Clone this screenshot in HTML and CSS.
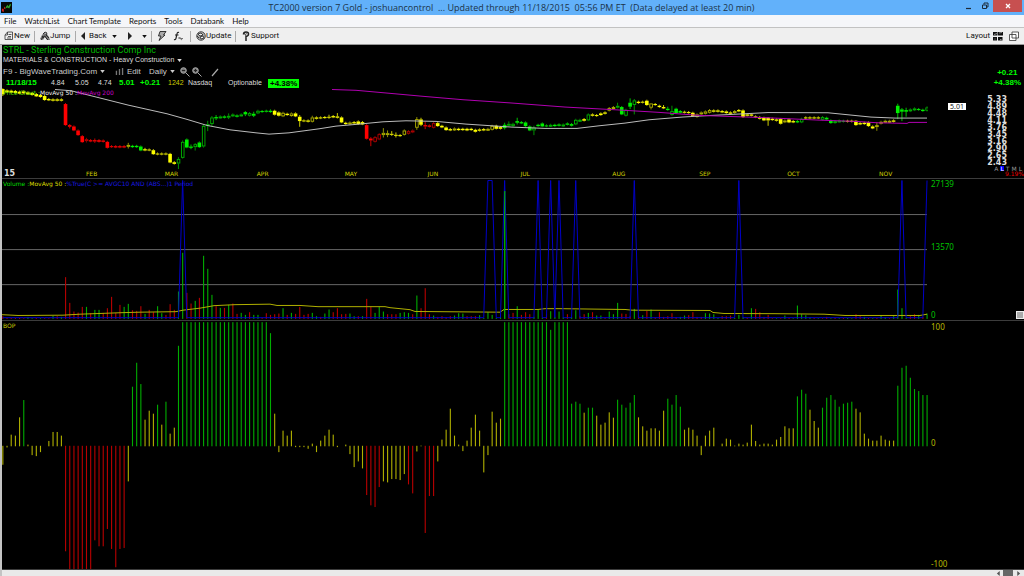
FILE: index.html
```html
<!DOCTYPE html>
<html lang="en">
<head>
<meta charset="utf-8">
<title>TC2000 version 7 Gold</title>
<link rel="stylesheet" href="styles.css">
</head>
<body>
<div class="app">
  <header class="titlebar">
    <svg class="app-icon" viewBox="0 0 12 12"><rect width="12" height="12" fill="#050805"/><path d="M1 10V7l2 1v3zM3 7l1-2 1 3z" fill="#e02020"/><path d="M5 6l2-3 1 2 2-3 1 1-2 4-2-1-2 1z" fill="#2ca42c"/></svg>
    <h1 class="title">TC2000 version 7 Gold - joshuancontrol  ... Updated through 11/18/2015  05:56 PM ET  (Data delayed at least 20 min)</h1>
    <div class="window-buttons">
      <button class="win" aria-label="Minimize"><svg viewBox="0 0 8 8"><path d="M1 6.500h5" stroke="#1c2a38" stroke-width="1.200"/></svg></button>
      <button class="win" aria-label="Restore"><svg viewBox="0 0 8 8" fill="none" stroke="#1c2a38"><path d="M1.500 3h4v3.500h-4zM3 2.500V1h4v4H6"/></svg></button>
      <button class="win close" aria-label="Close"><svg viewBox="0 0 8 8"><path d="M2 2l4 4M6 2l-4 4" stroke="#fff" stroke-width="1.300"/></svg></button>
    </div>
  </header>

  <nav class="menu">
    <a href="#">File</a><a href="#">WatchList</a><a href="#">Chart Template</a><a href="#">Reports</a><a href="#">Tools</a><a href="#">Databank</a><a href="#">Help</a>
  </nav>

  <div class="toolbar">
    <button class="tool tool-new"><svg class="ico" viewBox="0 0 10 10" fill="none" stroke="#333" stroke-width=".8"><path d="M3.500 1h5v7.500H1V4zM3.500 1v3H1M4 5.500h3M3 7h4M4.500 3.500h3"/></svg>New</button>
    <button class="tool tool-jump"><svg class="ico" viewBox="0 0 10 10"><path d="M0 8l2-4 2-2 3 1 2 3 1 3H7L5 6 3 9z" fill="#777"/><path d="M1 9l2-3 2-1 1 2 2 2M3 3l2-2 2 1-1 2 3 3M2 5l2 2" fill="none" stroke="#222" stroke-width=".9"/></svg>Jump</button>
    <button class="tool tool-back"><svg class="arrow" viewBox="0 0 6 8"><path d="M5 0v8L1 4z" fill="#222"/></svg>Back</button>
    <button class="tool tool-drop" aria-label="Back history"><svg class="caret" viewBox="0 0 6 4"><path d="M0 0h6L3 4z"/></svg></button>
    <button class="tool tool-forward" aria-label="Forward"><svg class="arrow" viewBox="0 0 6 8"><path d="M1 0v8l4-4z" fill="#222"/></svg></button>
    <button class="tool tool-drop-end" aria-label="Forward history"><svg class="caret" viewBox="0 0 6 4"><path d="M0 0h6L3 4z"/></svg></button>
    <button class="tool tool-flash" aria-label="Quick scan"><svg class="ico" viewBox="0 0 10 10"><path d="M3 .5h6L6.500 4H8L2 9.500 4 5H1.500z" fill="#aaa" stroke="#222" stroke-width=".9"/></svg></button>
    <button class="tool tool-formula" aria-label="Formula"><svg class="ico" viewBox="0 0 10 10" fill="none" stroke="#222"><path d="M6 1.500C4 .5 4 3 3.500 5S3 9.500 1 8.500M2 4h3.500" stroke-width="1.200"/><path d="M5.500 7q1-2 2 0t2 0M5.500 8q1-2 2 0t2-1" stroke-width=".6"/></svg></button>
    <button class="tool tool-update"><svg class="ico" viewBox="0 0 10 10"><circle cx="5" cy="5" r="4.300" fill="#aaa" stroke="#333" stroke-width=".8"/><path d="M2 3l3-1 2 2-3 1zM4 6l3-1 1 2-3 1zM1 5l2 2" fill="#eee" stroke="#222" stroke-width=".8"/></svg>Update</button>
    <button class="tool tool-support"><svg class="ico" viewBox="0 0 10 10" fill="none" stroke="#222"><path d="M2.500 3.500Q2.500 1 5 1t2.500 2Q7.500 5 5 5.500V10" stroke-width="1.500"/><path d="M4 3.500l2-1M3 2l2 3" stroke-width=".7"/></svg>Support</button>
    <div class="toolbar-end">
      <button class="tool tool-layout">Layout<svg class="ico" viewBox="0 0 10 10" fill="#111"><path d="M0 1h4.500v3.500H0zM5 1h5v3.500H5zM0 6h4v3.500H0zM5 6h4.500v3.500H5z"/><path d="M1 3.500l3-1M6 2l3-.5M1.500 8h1M7 8.500h1.500" stroke="#ddd" stroke-width=".6" fill="none"/></svg></button>
      <button class="tool" aria-label="Windows"><svg class="ico" viewBox="0 0 10 10" fill="#fff" stroke="#333" stroke-width=".8"><path d="M3 1h6.500v6H3zM.5 3.500H7v6H.5z"/></svg></button>
    </div>
  </div>

  <main class="charts">
    <section class="panel price">
      <div class="main-col">
        <div class="info">
          <h2 class="symbol">STRL - Sterling Construction Comp Inc</h2>
          <button class="sector">MATERIALS &amp; CONSTRUCTION - Heavy Construction<svg class="caret" viewBox="0 0 6 4"><path d="M0 0h6L3 4z"/></svg></button>
          <div class="controls">
            <button class="ctl ctl-list">F9 - BigWaveTrading.Com<svg class="caret" viewBox="0 0 6 4"><path d="M0 0h6L3 4z"/></svg></button>
            <button class="ctl ctl-edit"><svg class="bars-ico" viewBox="0 0 10 8" stroke="#777" stroke-width="1.500"><path d="M1.500 3v5M5 1v7M8.500 0v8"/></svg>Edit</button>
            <button class="ctl ctl-period">Daily<svg class="caret" viewBox="0 0 6 4"><path d="M0 0h6L3 4z"/></svg></button>
            <button class="ctl" aria-label="Zoom out"><svg class="ico" viewBox="0 0 10 10" stroke="#aaa" fill="#777"><circle cx="3.500" cy="3.500" r="2.800"/><path d="M6 6l3.500 3.500"/><path d="M2 3.500h3" stroke="#222"/></svg></button>
            <button class="ctl ctl-zoomin" aria-label="Zoom in"><svg class="ico" viewBox="0 0 10 10" stroke="#aaa" fill="#777"><circle cx="3.500" cy="3.500" r="2.800"/><path d="M6 6l3.500 3.500"/><path d="M2 3.500h3M3.500 2v3" stroke="#222"/></svg></button>
            <button class="ctl" aria-label="Draw line"><svg class="ico" viewBox="0 0 10 10"><path d="M1 9l6-7" stroke="#aaa" stroke-width="1.200"/></svg></button>
          </div>
          <div class="quote">
            <b class="up">11/18/15</b><span>4.84</span><span>5.05</span><span>4.74</span><b class="up">5.01</b><b class="up">+0.21</b><span class="vol">1242</span><span>Nasdaq</span><span>Optionable</span><b class="badge">+4.38%</b>
          </div>
        </div>
        <div class="plot-wrap">
          <svg class="plot" id="price" viewBox="2 88 926 81" preserveAspectRatio="none"></svg>
          <div class="legend"><span class="c-green">Price Chart :</span><span class="c-white">MovAvg 50 :</span><span class="c-magenta">MovAvg 200</span></div>
        </div>
        <div class="months">
          <b class="year">15</b><span>FEB</span><span>MAR</span><span>APR</span><span>MAY</span><span>JUN</span><span>JUL</span><span>AUG</span><span>SEP</span><span>OCT</span><span>NOV</span>
        </div>
      </div>
      <aside class="axis price-axis">
        <div class="change"><b>+0.21</b><b>+4.38%</b></div>
        <div class="scale-row">
          <span class="last">5.01</span>
          <div class="scale"><span>5.33</span><span>4.89</span><span>4.48</span><span>4.11</span><span>3.76</span><span>3.45</span><span>3.16</span><span>2.90</span><span>2.65</span><span>2.43</span></div>
        </div>
        <div class="modes"><span>A</span><span class="active">L</span><span>T</span><span>M</span><span>L</span></div>
        <span class="pct">9.19%</span>
      </aside>
    </section>

    <section class="panel volume">
      <div class="main-col plot-wrap">
        <svg class="plot" id="volume" viewBox="2 179 926 141" preserveAspectRatio="none"></svg>
        <div class="legend"><span class="c-lime">Volume :</span><span class="c-yellow">MovAvg 50 :</span><span class="c-blue">%True(C &gt;= AVGC10 AND (ABS...)1 Period</span></div>
      </div>
      <aside class="axis vol-axis"><span>27139</span><span class="mid">13570</span><div class="zero-row"><span>0</span><button class="grip" aria-label="Resize panel"></button></div></aside>
    </section>

    <section class="panel bop">
      <div class="main-col plot-wrap">
        <svg class="plot" id="bop" viewBox="2 321 926 248" preserveAspectRatio="none"></svg>
        <div class="legend"><span class="c-olive">BOP</span></div>
      </div>
      <aside class="axis bop-axis"><span>100</span><span class="mid">0</span><span>-100</span></aside>
    </section>
  </main>

  <footer class="scrollbar">
    <button class="sb" aria-label="Scroll left"><svg viewBox="0 0 6 6"><path d="M4.500 0v6L1 3z"/></svg></button>
    <span class="thumb"></span>
    <button class="sb" aria-label="Scroll right"><svg viewBox="0 0 6 6"><path d="M1.500 0v6L5 3z"/></svg></button>
  </footer>
</div>
<script src="charts.js"></script>
</body>
</html>
```

FILE: styles.css
```css
* { box-sizing: border-box; }
body { margin: 0; background: #000; font-family: "Liberation Sans", Arial, sans-serif; font-size: 8px; line-height: 10px; }
h1, h2 { margin: 0; font-weight: normal; }
button { margin: 0; padding: 0; border: 0; background: none; color: inherit; font: inherit; display: flex; align-items: center; white-space: nowrap; }
a { color: inherit; text-decoration: none; }
svg { display: block; flex: none; }
.app { display: flex; flex-direction: column; height: 100vh; border-left: 2px solid #c4c4c4; }

.titlebar { display: flex; align-items: flex-start; height: 15px; margin-left: -2px; background: #62b1fa; color: #1c3348; }
.app-icon { width: 11px; height: 11px; margin: 2px 0 0 1px; }
.title { flex: 1; text-align: center; white-space: pre; font: 9px/15px "Open Sans", "Noto Sans", sans-serif; padding-left: 50px; }
.window-buttons { display: flex; padding-right: 2px; }
.win { width: 16px; height: 12px; justify-content: center; }
.win svg { width: 8px; height: 8px; }
.close { width: 29px; background: #c75050; }

.menu { display: flex; gap: 8px; margin-left: -2px; padding-left: 4px; height: 13px; line-height: 12px; background: #f5f6f9; color: #111; border-bottom: 1px solid #c2c2c2; font-family: Lato, sans-serif; }

.toolbar { display: flex; align-items: center; height: 17px; margin-left: -2px; padding-left: 4px; background: #efefef; color: #111; border-bottom: 1px solid #999; font-family: Roboto, sans-serif; }
.tool { height: 11px; }
.ico { width: 10px; height: 10px; }
.arrow { width: 6px; height: 8px; margin-right: 3px; }
.caret { width: 5px; height: 3px; fill: currentColor; }
.tool-new { width: 31px; border-right: 1px solid #aaa; }
.tool-jump { width: 41px; padding-left: 5px; border-right: 1px solid #aaa; }
.tool-back { width: 36px; padding-left: 4px; }
.tool-drop { width: 15px; }
.tool-forward { width: 15px; }
.tool-drop-end { width: 10px; border-right: 1px solid #aaa; }
.tool-flash { width: 21px; padding-left: 5px; }
.tool-formula { width: 18px; border-right: 1px solid #aaa; }
.tool-update { width: 45px; padding-left: 5px; border-right: 1px solid #aaa; }
.tool-support { padding-left: 5px; }
.toolbar-end { display: flex; gap: 6px; margin-left: auto; padding-right: 5px; }
.tool-layout { gap: 3px; }

.charts { flex: 1; min-height: 0; display: flex; flex-direction: column; background: #000; color: #ddd; }
.panel { display: flex; min-height: 0; border-bottom: 1px solid #3c3c3c; }
.price { flex: 134 1 0; }
.volume { flex: 142 1 0; }
.bop { flex: 249 1 0; }
.main-col { flex: 1; min-width: 0; display: flex; flex-direction: column; }
.axis { width: 96px; display: flex; flex-direction: column; font-family: "Noto Sans", sans-serif; }
.plot-wrap { position: relative; flex: 1; min-height: 0; }
.plot { position: absolute; width: 100%; height: 100%; }
.legend { position: absolute; top: 1px; left: 1px; display: flex; font: 6px/8px "DejaVu Sans", sans-serif; white-space: nowrap; }

.info { padding-left: 1px; }
.symbol { font: 9px/10px Roboto, sans-serif; color: #00b800; }
.sector { gap: 3px; height: 10px; font-size: 7px; }
.controls { display: flex; height: 13px; align-items: center; color: #ccc; }
.ctl-list { width: 112px; gap: 3px; }
.ctl-edit { width: 34px; gap: 3px; }
.bars-ico { width: 9px; height: 7px; }
.ctl-period { width: 31px; gap: 3px; }
.ctl-zoomin { margin: 0 9px 0 2px; }
.quote { display: grid; grid-template-columns: 45px 24px 23px 21px 21px 28px 20px 40px 40px auto; justify-content: start; align-items: center; height: 10px; font-size: 7px; padding-left: 3px; white-space: nowrap; }
.quote .up { font-size: 8px; }
.up { color: #0f0; }
.vol { color: #cc0; }
.badge { background: #0f0; color: #000; font-size: 8px; line-height: 9px; padding: 0 2px; }

.months { display: grid; grid-template-columns: 83fr 79fr 92fr 88fr 83fr 93fr 92fr 87fr 88fr 92fr 49fr; height: 9px; padding-left: 1px; font: 6px/9px "DejaVu Sans", sans-serif; color: #d0d000; }
.months > * { min-width: 0; }
.year { color: #ddd; font-size: 8px; padding-left: 1px; }

.c-green { color: #5d0; }
.c-white { color: #eee; }
.c-magenta { color: #c800c8; }
.c-lime { color: #0d0; }
.c-yellow { color: #dd0; }
.c-blue { color: #1818e0; }
.c-olive { color: #cc0; }

.change { display: flex; flex-direction: column; align-self: flex-end; align-items: center; padding: 23px 3px 0 0; color: #0f0; font: 8px/10px "Liberation Sans", sans-serif; }
.scale-row { flex: 1; display: flex; justify-content: space-between; align-items: flex-start; padding: 8px 17px 0 20px; }
.last { background: #fff; color: #222; font-size: 7px; line-height: 7px; padding: 0 2px; margin-top: 7px; }
.scale { display: flex; flex-direction: column; font: bold 8px/7px "DejaVu Sans", sans-serif; color: #ddd; }
.price-axis { padding-bottom: 1px; }
.modes { display: flex; justify-content: flex-end; gap: 2px; padding-right: 2px; font: 6px/5px "DejaVu Sans", sans-serif; color: #999; }
.active { background: #00f; color: #fff; }
.pct { text-align: right; color: #e00; font: 6px/6px "DejaVu Sans", sans-serif; }
.vol-axis, .bop-axis { justify-content: space-between; padding-left: 3px; }
.vol-axis { color: #00c000; }
.bop-axis { color: #b8b800; padding-top: 1px; }
.mid { padding-bottom: 5px; }
.zero-row { display: flex; justify-content: space-between; align-items: center; }
.grip { width: 8px; height: 8px; background: #aaa; border: 1px solid #eee; }

.scrollbar { display: flex; justify-content: flex-end; height: 6px; background: #e9e9e9; padding-right: 1px; }
.sb { width: 10px; justify-content: center; }
.sb svg { width: 5px; height: 5px; fill: #555; }
.thumb { width: 10px; background: #666; }
```

FILE: charts.js
```js
const NS = "http://www.w3.org/2000/svg";
const X0 = 2.8, STEP = 4.182;
const barX = i => X0 + STEP * i;

function add(svg, tag, attrs) {
  const el = document.createElementNS(NS, tag);
  for (const k in attrs) el.setAttribute(k, attrs[k]);
  svg.appendChild(el);
}
function line(svg, points, color) {
  add(svg, "polyline", { points: points, fill: "none", stroke: color, "stroke-width": 1, "vector-effect": "non-scaling-stroke" });
}
function hline(svg, y, color) {
  line(svg, `2,${y} 927,${y}`, color);
}

/* Balance of power: 373 units is full scale. "*n" repeats the value n times. */
const bopData = `-57 -5 35 32 87 139 5 -28 -31 -19 0 16 43 43 32 -317 -373*6 -284 -302 -302 -250 -310 -365 -310 -307
-107 179 251 187 80 107 98 125 65 134 38 56 302 373*21 340 98 -19 47 32 47 -4 -4 -4 -9 8 -19 17 32 50 35
-4 0 5 -25 -64 -47 -68 -148 -179 -184 -124 -107 -110 -100 -100 -103 -85 -116 -143 -17 2 -262 -151 -151 -47 20 50 113
32 5 -16 17 56 95 47 -80 -28 104 71 83 373*11 350 373*4 128 134 128 101 116 116 92 65 71 102 86 140 125 116
131 154 87 60 47 54 54 47 107 143 125 154 119 50 56 50 32 -28 32 47 56 0 8 23 20 2 8 5 11 65 16 5 8 8 5 20
28 60 54 54 150 170 158 110 76 56 116 146 154 140 119 128 131 134 113 102 38 23 17 17 32 20 17 17 182 236 242 206 172 166 154 154`;

const bop = document.getElementById("bop");
bopData.trim().split(/\s+/).flatMap(t => {
  const [v, n] = t.split("*").map(Number);
  return Array(n || 1).fill(v);
}).forEach((v, i) => {
  if (!v) return;
  const h = Math.abs(v) / 3;
  const color = v > 114 ? "#00ac00" : v < -114 ? "#b80000" : "#b0b000";
  add(bop, "rect", { x: barX(i) - 0.5, y: v > 0 ? 446.5 - h : 446, width: 1.1, height: h, fill: color });
});

/* Volume bars: positive for up days, negative for down days. */
const volData = `-8 -3 -3 -3 -3 -2 6 2 -3 2 -2 -2 9 -8 6 -125 -48 -22 -19 -36 36 -17 27 27 -18 -32 -66 -18 -42 36 45 -26 -24 -38 15 -27 -20 38 17 -12 -44 -27 82 198 -78 -46 54 -63 189 150
72 -38 33 -33 42 -46 -15 18 12 -20 12 12 -4 -17 -12 -14 -16 32 -12 18 -15 -36 -12 -15 18 8 -6 16 28 -20 -32 -14 -15 16 8 -8 8 -60 -36 18 36 22 -14 -14 -14 18 20 18 -14 70
-32 -92 -14 10 -6 -8 -5 -8 10 17 16 -8 -8 -8 11 3 20 12 3 6 383 -14 -18 38 -12 -20 -14 6 28 4 -14 23 6 22 5 -14 6 26 -8 -14 18 -20 10 10 -3 22 14 48 -16 -15
-8 30 -10 11 -24 28 -4 -20 -6 -8 -17 -5 6 10 -11 -20 -6 -6 17 16 14 3 -8 -8 -10 3 12 5 -4 32 -30 -20 -6 -12 -2 2 -2 10 -3 2 40 14 11 5 -3 2 -2 -6 2 -3
2 -3 3 2 -14 -8 6 -3 2 -3 10 5 -2 8 88 32 3 -8 -14 12 -6 16`;

const vol = document.getElementById("volume");
[214.5, 249.5, 284.5].forEach(y => hline(vol, y, "#666"));
volData.trim().split(/\s+/).map(Number).forEach((v, i) => {
  const h = Math.abs(v) / 3;
  add(vol, "rect", { x: barX(i) - 0.5, y: 318.7 - h, width: 1.1, height: h, fill: v > 0 ? "#00ac00" : "#b80000" });
});
line(vol, "2,314.5 18,315.3 63,315 80,314 122,312.5 140,312 176,311.5 183,310 200,308 214,305.5 235,304.5 270,304 277,305.3 300,305.3 318,306.5 385,306.5 390,307.5 410,309.5 415,311.3 500,312 504,309.3 538,309.3 545,308.5 560,308.5 625,309.3 632,310 710,310.3 713,312.3 724,313.3 774,313.5 824,314 845,315.3 920,315.3 927,314", "#b0b000");
const peaks = [43, 116, 117, 120, 128, 131, 133, 137, 151, 176, 215, 221];
line(vol, Array.from({ length: 222 }, (_, i) => `${barX(i)},${peaks.includes(i) ? 180.5 : 317.5}`).join(" "), "#0000c8");
add(vol, "rect", { x: barX(120) - 0.5, y: 191, width: 1.1, height: 127.5, fill: "#00ac00" });

/* Candles: colour letter (lower case = hollow), body top, body bottom[, high[, low]] in thirds of a pixel. */
const candles = `Y12,28,10,33 Y16,22 Y17,23 Y18,24 Y20,26 Y19,25 Y22,28 Y24,30 Y27,34,24,36 Y30,36 Y33,45 Y42,46 Y43,47 Y43,47 Y43,47
R57,120 R120,125,117,130 R124,136 R136,150 R153,171 r162,168,158,172 R165,169 R165,169,160,173 R165,170 R166,170 R170,188 R183,186 R183,187 R183,187 R183,187
y179,184,173,190 G182,186 G182,186 G184,196 Y192,196,188 Y193,196 Y195,207 Y205,208 Y205,208 Y205,208 Y206,232 Y231,236,228,238 g221,235,216,256 g170,218,166,220 G163,187
G184,188,178,192 g177,186,174,196 G172,186 g122,184,118,187 g117,122,107,138 g97,117,93,124 G96,100,90,105 g94,98 G94,98 g92,98,85,102 g88,94 G91,95 g88,92 G81,88,78,93 g84,92
G86,92,80,96 g77,85 G78,81 G77,80 G77,81,73 Y77,89 Y82,92 y83,94 Y86,90 y85,93 Y85,94 Y95,108,90,125 Y106,109 Y106,110 y97,110,92 Y97,101
Y97,100 Y96,99 Y95,98,89,101 Y93,97 Y94,98,84 Y97,112 Y113,117 y112,118 Y111,115 Y109,117 Y111,118 R120,161 R160,166,156,183 r156,170 r147,163
y143,150,129,157 y144,150,136,156 Y146,149,138,152 Y149,152,142,157 Y150,153 y136,149 r138,146 r136,142 y102,128,96,134 Y103,119,98,123 R120,124,110,132 R121,125 r114,128 Y114,123 Y122,127
Y127,135 Y132,136 y130,135 Y131,135 Y131,135 Y131,136 Y131,135 Y134,140 Y133,137 Y132,136 y131,135 y122,134 Y122,131 Y126,131 G119,129,113,133
g116,122,109 g116,123 G108,113,98,118 G111,115 G112,123 G124,136 g127,136,122,150 G119,123 G115,124 G121,124 g119,123 G119,123 G118,122 g118,123 G115,119
G117,122 g104,118 g104,108 Y102,107 g88,106 Y88,92 Y90,93 Y85,90 Y82,86 y69,77 y66,70 g62,68,53 G66,88 g74,92 G53,65,40,72
g46,60,42,88 Y50,54 Y50,53 Y47,60 y55,68,55,73 Y57,60 Y62,66 Y66,70,60 G71,75,65 g78,90,62 G71,84 G78,83 Y80,83 Y81,84 Y83,93
y88,96 y82,88 y79,86 y75,83 Y76,80 Y76,80 Y78,82 Y79,84 Y82,86 y78,84 Y75,79 Y76,96 Y88,92 Y88,92 Y94,97
Y96,101 Y98,106 Y98,106,96,122 Y101,105 Y103,107 Y102,116 y106,112 Y103,112 Y108,112 G108,112 g101,112 Y97,100 Y97,100 Y97,100 Y97,100
g96,104 G98,103 G106,114 g108,114 g106,110 G107,110 Y107,110 Y107,110 Y107,120,105,122 Y114,118 Y113,117 Y112,123 Y124,130 y120,126,112,137 y110,116
y107,111 y107,111 Y106,110 G62,84,56,102 G73,80,69,108 G75,80,68,95 g73,79 g70,76 G72,75 G74,78 g67,77`;

const price = document.getElementById("price");
const palette = { Y: "#ffff00", G: "#00f000", R: "#ff0000", y: "#b4b400", g: "#00b400", r: "#b40000" };
candles.trim().split(/\s+/).slice(0, 222).forEach((c, i) => {
  const [top, bottom, high, low] = c.slice(1).split(",").map(Number);
  const y = v => 85 + v / 3;
  const color = palette[c[0]], x = barX(i), hollow = c[0] >= "a";
  const hi = high || top - 3, lo = low || bottom + 2;
  add(price, "rect", { x: x - 0.5, y: y(hi), width: 1, height: (top - hi) / 3, fill: color, opacity: 0.8 });
  add(price, "rect", { x: x - 0.5, y: y(bottom), width: 1, height: Math.max(0, lo - bottom) / 3, fill: color, opacity: 0.8 });
  add(price, "rect", hollow
    ? { x: x - 1.2, y: y(top) + 0.5, width: 2.6, height: Math.max(1, (bottom - top) / 3 - 1), fill: "none", stroke: color, "stroke-width": 0.9 }
    : { x: x - 1.8, y: y(top), width: 3.6, height: (bottom - top) / 3, fill: color });
});
line(price, "55,89.5 71,90.7 128,105 167,113.7 187,119.3 207,125.3 230,129.7 256,132.7 269,134 289,132.7 319,128.7 336,126 356,124.3 383,121.7 406,120.7 436,121.3 466,124 512,127 545,128.3 577,128.3 599,125.7 625,123 649,119.7 682,117 699,116 732,114.3 768,112.5 828,112.7 851,115 871,117 895,118 927,118", "#bbb");
line(price, "332,89.5 356,90.3 383,92.7 423,96.3 463,99.7 512,103 565,107 615,109.7 659,112.3 699,115.3 768,117.7 818,120 855,121.3 878,122.7 907,123.3 909,122.3 927,122.3", "#b000b0");
```
